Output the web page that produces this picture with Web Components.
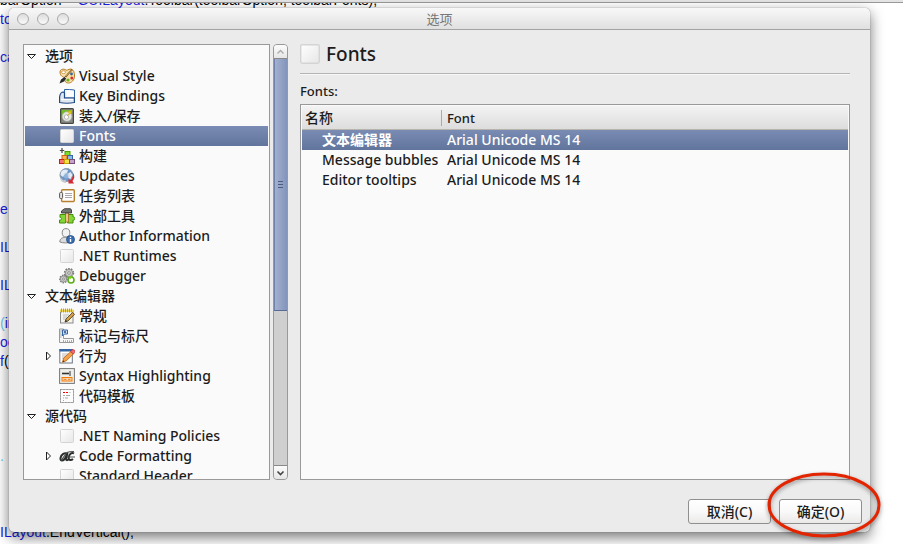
<!DOCTYPE html>
<html lang="zh-CN">
  <head>
    <meta charset="utf-8">
    <title>选项</title>
    <style>
      html, body { height: 100%; margin: 0; overflow: hidden; background: #fff; }
      body { font: 14px/20px "Noto Sans", "Noto Sans CJK SC", sans-serif; color: #1c1c1c; }
    </style>
  </head>
  <body>
    <template id="code-editor-template">
      <style>
        :host { display: block; height: 100%; overflow: hidden; font: 14px/19px "Liberation Sans", Arial, sans-serif; color: #000; }
        .bar { height: 2px; background: #e4e4e4; border-bottom: 1px solid #999; }
        .clip { height: calc(100% - 3px); overflow: hidden; }
        pre { margin: -12px 0 0; font: inherit; }
        ::slotted(b) { font-weight: normal; color: #1a1ae6; }
        ::slotted(i) { font-style: normal; color: #6cc8f0; }
      </style>
      <div class="bar"></div>
      <div class="clip"><pre><slot></slot></pre></div>
    </template>

    <template id="options-desktop-template">
      <style>
        :host { display: block; position: relative; height: 100%; }
        .window { position: absolute; top: 8px; right: 33px; bottom: 12px; left: 9px; }
      </style>
      <slot name="background"></slot>
      <div class="window"><slot></slot></div>
    </template>

    <template id="dialog-window-template">
      <style>
        :host { display: flex; flex-direction: column; height: 100%; background: #ebebeb; border-radius: 5px; box-shadow: 0 0 1px #555, 0 5px 14px rgba(0, 0, 0, .55); }
        header { display: grid; grid-template-columns: 1fr auto 1fr; align-items: center; height: 21px; padding: 0 8px; border-bottom: 1px solid #a3a3a3; border-radius: 5px 5px 0 0; background: linear-gradient(#f8f8f8, #e0e0e0); }
        .lights { display: flex; gap: 8px; }
        .lights button { width: 12px; height: 12px; padding: 0; border: 1px solid #aaa; border-radius: 50%; background: linear-gradient(#dcdcdc, #fafafa); }
        h1 { margin: 0; font-size: 13px; font-weight: normal; color: #777; }
        main { flex: 1; min-height: 0; display: flex; gap: 12px; padding: 14px 20px 0 14px; }
        footer { display: flex; justify-content: flex-end; gap: 8px; padding: 19px 8px 8px; }
      </style>
      <header>
        <div class="lights">
          <button aria-label="关闭"></button><button aria-label="最小化"></button><button aria-label="缩放"></button>
        </div>
        <h1><slot name="title"></slot></h1>
      </header>
      <main><slot></slot></main>
      <footer><slot name="actions"></slot></footer>
    </template>

    <template id="push-button-template">
      <style>
        :host { display: block; position: relative; }
        button { display: block; width: 83px; height: 25px; padding: 0; border: 1px solid #8f8f8f; border-radius: 3px; background: linear-gradient(#fff, #f9f9f9 50%, #ebe9e7); font: inherit; font-weight: 500; color: inherit; }
        svg { display: none; }
        :host([circled]) svg { display: block; position: absolute; top: -29px; left: -13px; pointer-events: none; filter: drop-shadow(0 2px 2px rgba(0, 0, 0, .4)); }
      </style>
      <button><slot></slot></button>
      <svg width="116" height="70" viewBox="0 0 116 70"><ellipse cx="58" cy="35" rx="55" ry="31" fill="none" stroke="#e32400" stroke-width="3"/></svg>
    </template>

    <template id="scroll-pane-template">
      <style>
        :host { display: flex; gap: 3px; width: 265px; flex: none; }
        .view { flex: 1; min-width: 0; overflow: hidden; box-sizing: border-box; padding: 1px; border: 1px solid #999; background: #fafafa; }
        .bar { display: flex; flex-direction: column; width: 15px; box-sizing: border-box; border: 1px solid #999; border-radius: 4px; background: #cfcfcf; overflow: hidden; }
        .bar button { display: flex; align-items: center; justify-content: center; height: 14px; padding: 0; border: 0; background: linear-gradient(#fcfcfc, #e6e6e6); }
        .bar button:first-child { border-bottom: 1px solid #888; }
        .bar button:last-child { border-top: 1px solid #888; }
        .track { flex: 1; }
        .thumb { display: flex; flex-direction: column; align-items: center; justify-content: center; gap: 2px; height: 62%; box-sizing: border-box; border-bottom: 1px solid #586a96; background: linear-gradient(to right, #a5b3d0, #8394bd); box-shadow: inset 1px 0 #6f81ac; }
        .thumb span { width: 5px; height: 1px; background: #4c5b82; }
      </style>
      <div class="view"><slot></slot></div>
      <div class="bar">
        <button aria-label="向上"><svg width="9" height="6"><path d="M1.5 4.5l3-3 3 3" fill="none" stroke="#aaa" stroke-width="1.4"/></svg></button>
        <div class="track"><div class="thumb"><span></span><span></span><span></span></div></div>
        <button aria-label="向下"><svg width="9" height="6"><path d="M1.5 1.5l3 3 3-3" fill="none" stroke="#444" stroke-width="1.6"/></svg></button>
      </div>
    </template>

    <template id="tree-row-template">
      <style>
        :host { display: flex; align-items: center; height: 20px; padding-left: 18px; white-space: nowrap; font-weight: 500; }
        :host([group]) { padding-left: 2px; }
        .arrow { display: flex; justify-content: center; width: 10px; margin-right: 6px; }
        :host([group]) .arrow { margin-right: 8px; }
        option-icon { margin-right: 4px; }
        svg { display: none; }
        :host([open]) .down, :host([closed]) .right { display: block; }
        :host([selected]) { color: #fff; background: linear-gradient(#7a8cb3, #61749c); }
      </style>
      <span class="arrow">
        <svg class="down" width="10" height="7"><path d="M.5 1.500h8l-4 4z" fill="#fff" stroke="#222"/></svg>
        <svg class="right" width="7" height="10"><path d="M1.5 1v8l4-4z" fill="#fff" stroke="#222"/></svg>
      </span>
      <slot></slot>
    </template>

    <template id="fonts-panel-template">
      <style>
        :host { flex: 1; min-width: 0; display: flex; flex-direction: column; }
        .head { display: flex; align-items: center; gap: 6px; height: 20px; padding-bottom: 9px; border-bottom: 1px solid #b3b3b3; box-shadow: 0 1px #f8f8f8; }
        h2 { margin: 0; font-size: 19px; line-height: 20px; font-weight: 500; }
        .label { padding: 7px 0 3px; font-size: 13px; font-weight: 500; }
        .list { flex: 1; padding: 1px; border: 1px solid #999; background: #fafafa; }
        table { width: 100%; border-collapse: collapse; table-layout: fixed; text-align: left; white-space: nowrap; }
        tr { height: 20px; }
        th, td { padding: 0 0 0 5px; font-weight: 500; }
        td:first-child { padding-left: 20px; }
        th:first-child { width: 137px; padding-left: 3px; }
        thead tr { height: 24px; background: linear-gradient(#f3f3f3, #dcdcdc); box-shadow: inset 0 -1px #b5b5ac; }
        th { font-size: 13px; }
        th:first-child { font-size: 14px; background: linear-gradient(#aaa, #aaa) right center / 1px 16px no-repeat; }
        tr.selected { color: #fff; background: linear-gradient(#7a8cb3, #61749c); }
        tr.selected td:first-child { font-weight: bold; }
      </style>
      <div class="head"><option-icon name="blank" large></option-icon><h2>Fonts</h2></div>
      <div class="label" id="fonts-label">Fonts:</div>
      <div class="list">
        <table aria-labelledby="fonts-label">
          <thead><tr><th>名称</th><th>Font</th></tr></thead>
          <tbody>
            <tr class="selected"><td>文本编辑器</td><td>Arial Unicode MS 14</td></tr>
            <tr><td>Message bubbles</td><td>Arial Unicode MS 14</td></tr>
            <tr><td>Editor tooltips</td><td>Arial Unicode MS 14</td></tr>
          </tbody>
        </table>
      </div>
    </template>

    <options-desktop>
      <code-editor slot="background">barOption = <b>GUILayout</b>.Toolbar(toolbarOption, toolbarFonts);
<b>to</b>

<b>ca</b>







<b>e</b>

<b>IL</b>

<b>IL</b>

<i>(</i><b>in</b>
<b>oc</b>
<b>f</b>(<b>G</b>




<i>.</i>



<b>ILayout</b>.EndVertical();</code-editor>

      <dialog-window>
        <span slot="title">选项</span>
        <scroll-pane>
          <tree-row group open>选项</tree-row>
          <tree-row icon="palette">Visual Style</tree-row>
          <tree-row icon="keys">Key Bindings</tree-row>
          <tree-row icon="disk">装入/保存</tree-row>
          <tree-row icon="blank" selected>Fonts</tree-row>
          <tree-row icon="bricks">构建</tree-row>
          <tree-row icon="globe">Updates</tree-row>
          <tree-row icon="tasks">任务列表</tree-row>
          <tree-row icon="tools">外部工具</tree-row>
          <tree-row icon="author">Author Information</tree-row>
          <tree-row icon="blank">.NET Runtimes</tree-row>
          <tree-row icon="gears">Debugger</tree-row>
          <tree-row group open>文本编辑器</tree-row>
          <tree-row icon="notepad">常规</tree-row>
          <tree-row icon="ruler">标记与标尺</tree-row>
          <tree-row icon="pencil" closed>行为</tree-row>
          <tree-row icon="syntax">Syntax Highlighting</tree-row>
          <tree-row icon="snippet">代码模板</tree-row>
          <tree-row group open>源代码</tree-row>
          <tree-row icon="blank">.NET Naming Policies</tree-row>
          <tree-row icon="format" closed>Code Formatting</tree-row>
          <tree-row icon="blank">Standard Header</tree-row>
        </scroll-pane>
        <fonts-panel></fonts-panel>
        <push-button slot="actions">取消(C)</push-button>
        <push-button slot="actions" circled>确定(O)</push-button>
      </dialog-window>
    </options-desktop>

    <script>
    const icons = {
      blank: `<defs><linearGradient id="g" x2="1" y2="1"><stop stop-color="#fff"/><stop offset="1" stop-color="#e6e6e6"/></linearGradient></defs>
        <rect x="1.5" y="1.5" width="13" height="13" rx="1" fill="url(#g)" stroke="#d4d4d4"/>`,
      palette: `<path d="M1 4C1 1 5 .5 7 2c1 1 2-1 5-1 3 1 3.500 4 3.500 7 0 4-3 7-6 7-4 0-4-3-3-5C4 9 1 8 1 4z" fill="#f7dfab" stroke="#b87a1c"/>
        <ellipse cx="4.5" cy="4.2" rx="2" ry="1.5" fill="#fff" stroke="#c98f35" stroke-width=".8"/>
        <circle cx="12.500" cy="6" r="1.4" fill="#3465a4"/><circle cx="12.800" cy="10" r="1.5" fill="#d8302a"/><circle cx="9" cy="12" r="1.6" fill="#66b51d"/>
        <path d="M13 1.500L6 9.500" stroke="#8a5a14" stroke-width="1.8"/><path d="M12.500 2L7 8" stroke="#f0cf8d" stroke-width=".6"/><path d="M5.500 9l1.500 1.500-2 3L.5 15.500l1.500-4z" fill="#2a2a2a"/><path d="M5.500 8.500l2 2" stroke="#ccc"/>`,
      keys: `<path d="M5.5 1.500v8.500h10V2c-3-.6-7-.6-10-.5z" fill="#f5f8fc" stroke="#3465a4"/>
        <path d="M8 3h6v5H8z" fill="#fff"/>
        <path d="M.6 14V9C1 6 2 4 4.5 4L5.5 5v5h9.900v4.500c-5 1-10 1-14.800 0z" fill="#dfe6ee" stroke="#204a87" stroke-width="1.2"/>
        <path d="M2 11.500h12" stroke="#fff"/>`,
      disk: `<rect x="1.6" y=".6" width="12.8" height="14.8" rx="1" fill="#888a85" stroke="#44483f" stroke-width="1.2"/>
        <rect x="3" y="2" width="10" height="8" fill="#73bd2a"/><circle cx="8" cy="8.500" r="4.800" fill="#e3e6df" stroke="#aaa" stroke-width=".6"/><circle cx="7.500" cy="9" r="2.200" fill="#fff" stroke="#aaa" stroke-width=".8"/>
        <path d="M13 2L9 4l1.500 1L8 8l5-3.500L11.500 4 13 3z" fill="#edd400" stroke="#c4a000" stroke-width=".4"/>`,
      bricks: `<path d="M3 0v5M.8 2.500h4.400" stroke="#444" stroke-width="1.2"/>
        <rect x="6" y="3.5" width="5" height="4" fill="#7ddb2f" stroke="#4e9a06"/>
        <rect x="3" y="7.5" width="5" height="4" fill="#f9b45a" stroke="#ce6a10"/><rect x="8.500" y="7.5" width="5" height="4" fill="#8db7e8" stroke="#3465a4"/>
        <rect x=".5" y="11.5" width="5" height="4" fill="#f57575" stroke="#c4201c"/><rect x="5.5" y="11.5" width="5" height="4" fill="#f5df4d" stroke="#c4a000"/><rect x="10.5" y="11.5" width="5" height="4" fill="#c8a0cd" stroke="#75507b"/>`,
      globe: `<circle cx="7.5" cy="7" r="6.500" fill="#6d97ca" stroke="#8694a5"/>
        <path d="M2 4c2-3 5-3 7-2L8 5 6 6 4 9 1.500 7zM8.500 6l3-2 2 3-2 4-2-1z" fill="#e6ecf3"/><path d="M1 9.500c0 3 2.500 5.500 6 5.500l-.5-3.500-2 1z" fill="#c9cdd2"/>
        <path d="M14.200 5c1.800 3 1.300 6-.7 8l1.500 2.500H9.500V11l1.700 1.200c2-1.500 3-4 3-7.200z" fill="#d42a30"/><circle cx="7.500" cy="7.500" r="3" fill="#b5cde7" opacity=".5"/>`,
      tasks: `<rect x="2.600" y="1.700" width="12.700" height="11.800" rx="1" fill="#fff" stroke="#b8802c" stroke-width="1.400"/>
        <path d="M6 5.5h7M6 7.5h7M6 9.5h7" stroke="#aaa"/><rect x=".6" y="4.5" width="3" height="6" rx="1" fill="#e6e6e6" stroke="#555"/>`,
      tools: `<path d="M1 6.5h13V9c2.500-1 2.500 4 0 3v3H8.500v-1.500h-2V15H.5v-3c2.500 1 2.500-3 .5-2.500z" fill="#7fd636" stroke="#478c0a"/>
        <rect x="6.500" y="4" width="3" height="10" fill="#edc48a" stroke="#a8641a" stroke-width=".8"/>
        <path d="M2.500 5V3l3-2.300h6l1 1.300v3z" fill="#70746e" stroke="#292c29" stroke-width=".8"/>`,
      author: `<path d="M.8 14C.8 10.500 4 9 7 9s5.500 2 5.500 5c-3.500 1.200-8 1.200-11.700 0z" fill="#dcdcdc" stroke="#888"/>
        <ellipse cx="7" cy="4.800" rx="3.800" ry="4.200" fill="#f2f2f2" stroke="#888"/>
        <circle cx="11.500" cy="11.500" r="4" fill="#3b6db0" stroke="#204a87" stroke-width=".8"/><path d="M11.500 8.800v1.300M11.500 11v3" stroke="#fff" stroke-width="1.4"/>`,
      gears: `<circle cx="10" cy="5" r="4.300" fill="none" stroke="#777" stroke-width="1.800" stroke-dasharray="1.600 1.100"/><circle cx="10" cy="5" r="3.700" fill="#c9cbc6" stroke="#858585" stroke-width=".8"/><circle cx="10" cy="5" r="1.3" fill="#fff" stroke="#777" stroke-width=".8"/>
        <circle cx="4.5" cy="11" r="3.600" fill="none" stroke="#777" stroke-width="1.600" stroke-dasharray="1.500 1"/><circle cx="4.5" cy="11" r="3.100" fill="#c9cbc6" stroke="#858585" stroke-width=".8"/><circle cx="4.5" cy="11" r="1" fill="#fff" stroke="#777" stroke-width=".8"/>
        <circle cx="12" cy="12" r="3" fill="#fff" stroke="#5cae15" stroke-width="1.600"/><path d="M9.500 8l4 .5-2.500 3z" fill="#73d216"/>`,
      notepad: `<rect x="1.5" y="2.5" width="12.5" height="12.5" fill="#f4f4ef" stroke="#888"/><rect x="1" y="1.5" width="13.5" height="2.500" fill="#edd458"/>
        <path d="M2.5 .5v4M4.5 .5v4M6.5 .5v4M8.5 .5v4M10.5 .5v4M12.5 .5v4" stroke="#b48a10" stroke-width=".8"/>
        <path d="M4 7h6M4 9h4M4 11h3" stroke="#bbb"/><path d="M13.500 4.500l2 1.800-6.500 6.700-3 1 1-3z" fill="#d2a048" stroke="#4b3514" stroke-width=".8"/><path d="M6 14l1-2 1 1z" fill="#222"/>`,
      ruler: `<path d="M.5 1v13.500h14v-4h-10V1z" fill="#f7f7f7" stroke="#999"/><path d="M1 3h2M1 5h1.5M1 7h2M1 9h1.5M4.5 14v-2M6.5 14v-1.5M8.5 14v-2M10.5 14v-1.5M12.5 14v-2" stroke="#888" stroke-width=".7"/>
        <path d="M3.500 2h5v4h-3l-2 2z" fill="#c9dcf1" stroke="#3465a4"/><circle cx="6" cy="4" r="1" fill="#204a87"/>`,
      pencil: `<rect x=".8" y="1.5" width="12.500" height="13.5" fill="#fff" stroke="#6b7480"/><rect x=".5" y="1" width="13" height="2.500" fill="#3465a4"/>
        <path d="M3 6h6M3 8h4M3 10h3" stroke="#bbb"/><path d="M12 3.500l2.500 2.200-7 7-4 1.500 1-4z" fill="#f3a34b" stroke="#b75c0c" stroke-width=".8"/><path d="M11.5 3.800L13 1.500l2.500.5.300 2.500-1.500 1.500z" fill="#ef6670" stroke="#b5232e" stroke-width=".6"/><path d="M3.500 14.200l.8-2 1.200 1.200z" fill="#333"/>`,
      syntax: `<rect x=".6" y=".6" width="14.8" height="14.8" fill="#eeeeea" stroke="#777"/><path d="M3 5.5h7" stroke="#333" stroke-width="1.600"/><path d="M11 3v5" stroke="#333"/>
        <rect x="3" y="9.500" width="10" height="3.500" fill="#fcdcb4" stroke="#f57900"/><path d="M4.500 11.300h3M9 11.300h2.500" stroke="#d06a10" stroke-width=".8"/>`,
      snippet: `<rect x="1.5" y="1.5" width="13" height="13" fill="#fcfcfc" stroke="#b5b5b5"/><rect x="1.500" y="1.500" width="13" height="13" fill="none" stroke="#888" stroke-dasharray="1 2"/>
        <path d="M4 4.5h2M7 4.5h2" stroke="#e00" stroke-width="1.2"/><path d="M10.500 4.5h1M4 7.5h2M7 7.5h4M4 10h1M6 10h3M4 12.500h1" stroke="#aaa"/>`,
      format: `<path d="M8 6C6 4 2 6.500 1.500 10s3 3.500 5-.5L8.500 5 7 11c0 1.500 1.500 1.500 3 0M15 5.500C12.500 4 10 6.500 9.700 9.500s2.500 3 4.300 1.500" fill="none" stroke="#2c2e2e" stroke-width="2"/><path d="M2 12.500L8 4.500c2-1 4-1 7-1M8 9h8" fill="none" stroke="#4a4d4d" stroke-width="1.200"/>`
    };

    // Clones the template named after the element into a shadow root.
    class TemplateElement extends HTMLElement {
      constructor() {
        super();
        const template = document.getElementById(this.localName + '-template').content;
        this.attachShadow({mode: 'open'}).appendChild(template.cloneNode(true));
      }
    }

    customElements.define('option-icon',
      class extends HTMLElement {
        connectedCallback() {
          const size = this.hasAttribute('large') ? 20 : 16;
          const box = this.hasAttribute('large') ? '1 1 14 14' : '0 0 16 16';
          const root = this.shadowRoot || this.attachShadow({mode: 'open'});
          root.innerHTML = `<style>:host { display: block; flex: none; } svg { display: block; }</style>
            <svg width="${size}" height="${size}" viewBox="${box}" aria-hidden="true">${icons[this.getAttribute('name')]}</svg>`;
        }
      });

    customElements.define('tree-row',
      class extends TemplateElement {
        connectedCallback() {
          if (this.hasAttribute('icon')) {
            const icon = document.createElement('option-icon');
            icon.setAttribute('name', this.getAttribute('icon'));
            this.shadowRoot.querySelector('.arrow').after(icon);
          }
        }
      });

    for (const name of ['code-editor', 'scroll-pane', 'fonts-panel', 'push-button', 'dialog-window', 'options-desktop']) {
      customElements.define(name, class extends TemplateElement {});
    }
    </script>
  </body>
</html>
